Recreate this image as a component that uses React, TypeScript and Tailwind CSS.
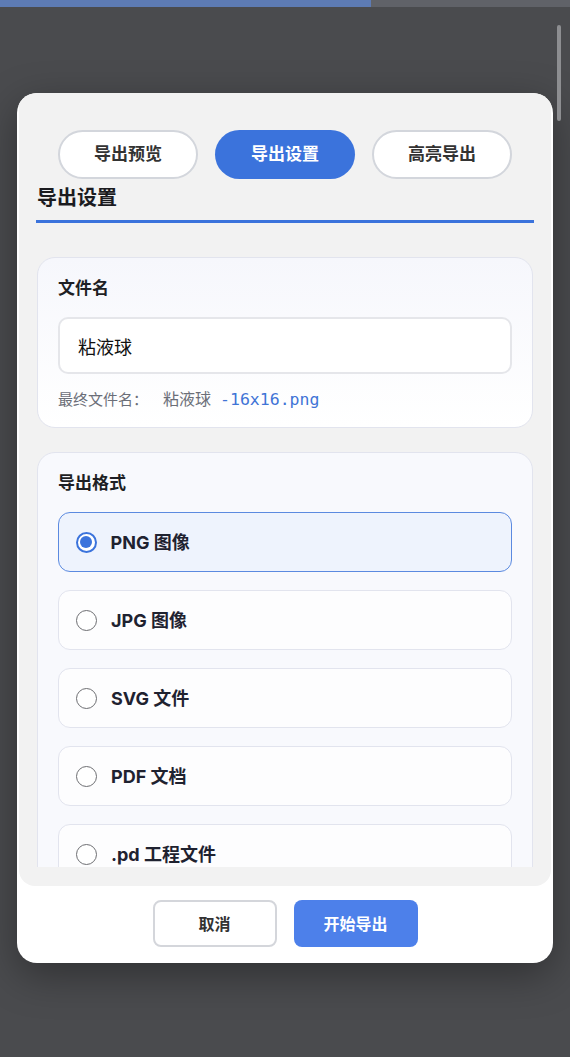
import { useState } from "react";

const TABS = ["导出预览", "导出设置", "高亮导出"];

const FORMATS = [
  { id: "png", label: "PNG 图像" },
  { id: "jpg", label: "JPG 图像" },
  { id: "svg", label: "SVG 文件" },
  { id: "pdf", label: "PDF 文档" },
  { id: "pd", label: ".pd 工程文件" },
];

const font = "font-['Inter','Noto_Sans_CJK_SC',sans-serif]";

function Radio({ checked }: { checked: boolean }) {
  if (checked) {
    return (
      <span className="flex h-[21px] w-[21px] shrink-0 items-center justify-center rounded-full border-2 border-[#3b73dc] bg-white">
        <span className="h-[12px] w-[12px] rounded-full bg-[#3b73dc]" />
      </span>
    );
  }
  return <span className="h-[21px] w-[21px] shrink-0 rounded-full border-[1.5px] border-[#6d6e72] bg-white" />;
}

export default function App() {
  const [tab, setTab] = useState(1);
  const [format, setFormat] = useState("png");
  const [name, setName] = useState("粘液球");

  return (
    <div className={`relative min-h-[1057px] w-full bg-[#4a4b4e] ${font}`}>
      <div className="flex h-[7px]">
        <div className="w-[371px] bg-[#5d7bb4]" />
        <div className="flex-1 bg-[#606268]" />
      </div>
      <div className="absolute right-[9px] top-[25px] h-[96px] w-[4px] rounded-full bg-[#8d8e91]" />

      <div className="mx-[17px] mt-[86px] w-[536px] overflow-hidden rounded-[20px] bg-white shadow-[0_12px_40px_rgba(0,0,0,0.35)]">
        <div className="mx-[2px] rounded-b-[16px] bg-[#f2f2f2] pb-[19px] pt-[37px]">
          <div className="flex justify-center gap-[17px]">
            {TABS.map((t, i) => (
              <button
                key={t}
                onClick={() => setTab(i)}
                className={
                  i === tab
                    ? "h-[49px] w-[140px] rounded-full bg-[#3b73dc] text-[17px] font-bold text-white"
                    : "h-[49px] w-[140px] rounded-full border-2 border-[#d3d6dc] bg-white text-[17px] font-bold text-[#333]"
                }
              >
                {t}
              </button>
            ))}
          </div>

          <div className="h-[688px] overflow-hidden px-[17px]">
            <h2 className="mt-[5px] border-b-[3px] border-[#3b73dc] pb-[8px] pl-[1px] text-[20px] font-bold leading-[28px] text-[#1b1b1f]">
              导出设置
            </h2>

            <section className="mx-[1px] mt-[34px] rounded-[18px] border border-[#e2e4ee] bg-gradient-to-b from-[#f6f7fc] to-white px-[20px] pb-[16px] pt-[18px]">
              <label className="block text-[17px] font-bold leading-[24px] text-[#1e1f24]">文件名</label>
              <input
                value={name}
                onChange={(e) => setName(e.target.value)}
                className="mt-[17px] h-[57px] w-full rounded-[10px] border-2 border-[#e5e6ea] bg-white px-[18px] text-[18px] text-[#111] outline-none"
              />
              <p className="mt-[14px] text-[15px] leading-[22px] text-[#6b6e78]">
                最终文件名：
                <span className="ml-[15px] text-[16px]">{name}</span>
                <span className="ml-[9px] font-['DejaVu_Sans_Mono',monospace] text-[16.5px] text-[#3f74d6]">-16x16.png</span>
              </p>
            </section>

            <section className="mx-[1px] mt-[24px] rounded-[18px] border border-[#e2e4ee] bg-[#f8f9fd] px-[20px] pt-[18px]">
              <label className="block text-[17px] font-bold leading-[24px] text-[#1e1f24]">导出格式</label>
              <div className="mt-[17px] flex flex-col gap-[18px] pb-[20px]">
                {FORMATS.map((f) => {
                  const on = f.id === format;
                  return (
                    <button
                      key={f.id}
                      onClick={() => setFormat(f.id)}
                      className={
                        on
                          ? "flex h-[60px] items-center gap-[14px] rounded-[12px] border-[1.5px] border-[#5b8ae0] bg-[#eef3fd] pl-[16.5px] text-left"
                          : "flex h-[60px] items-center gap-[14px] rounded-[12px] border border-[#e2e4ee] bg-[#fdfdfe] pl-[17px] text-left"
                      }
                    >
                      <Radio checked={on} />
                      <span className="text-[18px] font-bold text-[#1f2230]">{f.label}</span>
                    </button>
                  );
                })}
              </div>
            </section>
          </div>
        </div>

        <div className="flex justify-center gap-[17px] pb-[16px] pt-[14px]">
          <button className="h-[47px] w-[124px] rounded-[8px] border-2 border-[#d4d6db] bg-white text-[16px] font-bold text-[#333]">
            取消
          </button>
          <button className="h-[47px] w-[124px] rounded-[8px] bg-[#4d80ea] text-[16px] font-bold text-white">
            开始导出
          </button>
        </div>
      </div>
    </div>
  );
}
